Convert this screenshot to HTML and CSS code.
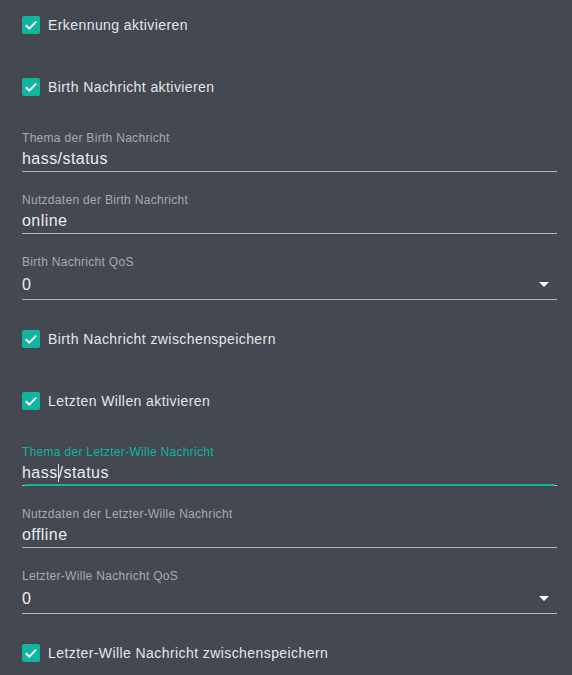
FILE: index.html
```html
<!DOCTYPE html>
<html lang="de">
<head>
<meta charset="utf-8">
<link rel="stylesheet" href="styles.css">
</head>
<body>
<div class="form">
  <div class="cb-row"><span class="box"><svg viewBox="0 0 18 18" width="18" height="18"><polyline points="3.8,9.2 7.3,12.6 14.2,5.6" fill="none" stroke="#fff" stroke-width="2"/></svg></span><span class="cb-label">Erkennung aktivieren</span></div>
  <div class="cb-row"><span class="box"><svg viewBox="0 0 18 18" width="18" height="18"><polyline points="3.8,9.2 7.3,12.6 14.2,5.6" fill="none" stroke="#fff" stroke-width="2"/></svg></span><span class="cb-label">Birth Nachricht aktivieren</span></div>
  <div class="field">
    <div class="label">Thema der Birth Nachricht</div>
    <div class="value">hass/status</div>
  </div>
  <div class="field">
    <div class="label">Nutzdaten der Birth Nachricht</div>
    <div class="value">online</div>
  </div>
  <div class="field select">
    <div class="label">Birth Nachricht QoS</div>
    <div class="value">0<span class="arrow"></span></div>
  </div>
  <div class="cb-row"><span class="box"><svg viewBox="0 0 18 18" width="18" height="18"><polyline points="3.8,9.2 7.3,12.6 14.2,5.6" fill="none" stroke="#fff" stroke-width="2"/></svg></span><span class="cb-label">Birth Nachricht zwischenspeichern</span></div>
  <div class="cb-row"><span class="box"><svg viewBox="0 0 18 18" width="18" height="18"><polyline points="3.8,9.2 7.3,12.6 14.2,5.6" fill="none" stroke="#fff" stroke-width="2"/></svg></span><span class="cb-label">Letzten Willen aktivieren</span></div>
  <div class="field focused">
    <div class="label">Thema der Letzter-Wille Nachricht</div>
    <div class="value">hass<span class="caret"></span>/status</div>
  </div>
  <div class="field">
    <div class="label">Nutzdaten der Letzter-Wille Nachricht</div>
    <div class="value">offline</div>
  </div>
  <div class="field select">
    <div class="label">Letzter-Wille Nachricht QoS</div>
    <div class="value">0<span class="arrow"></span></div>
  </div>
  <div class="cb-row"><span class="box"><svg viewBox="0 0 18 18" width="18" height="18"><polyline points="3.8,9.2 7.3,12.6 14.2,5.6" fill="none" stroke="#fff" stroke-width="2"/></svg></span><span class="cb-label">Letzter-Wille Nachricht zwischenspeichern</span></div>
</div>
</body>
</html>
```
FILE: styles.css
```css
html, body {
  margin: 0;
  padding: 0;
  background: #434851;
  height: 100%;
}
body {
  font-family: "Liberation Sans", Arial, sans-serif;
  color: #e3e3e5;
  overflow: hidden;
}
.form {
  padding: 0 15px 0 22px;
  display: flex;
  flex-direction: column;
}
.cb-row {
  height: 50px;
  display: flex;
  align-items: center;
  margin-bottom: 12px;
}
.cb-row + .field {
  margin-top: 5px;
}
.box {
  width: 18px;
  height: 18px;
  border-radius: 2px;
  background: #12b4a0;
  display: block;
  flex: none;
}
.box svg {
  display: block;
}
.cb-label {
  margin-left: 8px;
  font-size: 14px;
  line-height: 20px;
  letter-spacing: 0.42px;
  color: #e6e6e8;
}
.field {
  position: relative;
  border-bottom: 1px solid #b4b7be;
  margin-bottom: 19px;
}
.field.select {
  margin-bottom: 14px;
}
.label {
  height: 16px;
  line-height: 18px;
  font-size: 12px;
  color: #a8abb2;
  letter-spacing: 0.3px;
  white-space: nowrap;
}
.value {
  height: 26px;
  line-height: 28px;
  font-size: 16px;
  color: #ececee;
  letter-spacing: 0.45px;
  position: relative;
}
.select .value {
  height: 30px;
  line-height: 32px;
}
.arrow {
  position: absolute;
  right: 8px;
  top: 13px;
  width: 0;
  height: 0;
  border-left: 5px solid transparent;
  border-right: 5px solid transparent;
  border-top: 5px solid #ffffff;
}
.focused .label {
  color: #12b4a0;
}
.focused::after {
  content: "";
  position: absolute;
  left: 3px;
  right: 3px;
  bottom: -1px;
  height: 2px;
  background: #12b4a0;
}
.caret {
  display: inline-block;
  width: 1px;
  height: 18px;
  background: #e6e6e8;
  vertical-align: -4px;
}
```
